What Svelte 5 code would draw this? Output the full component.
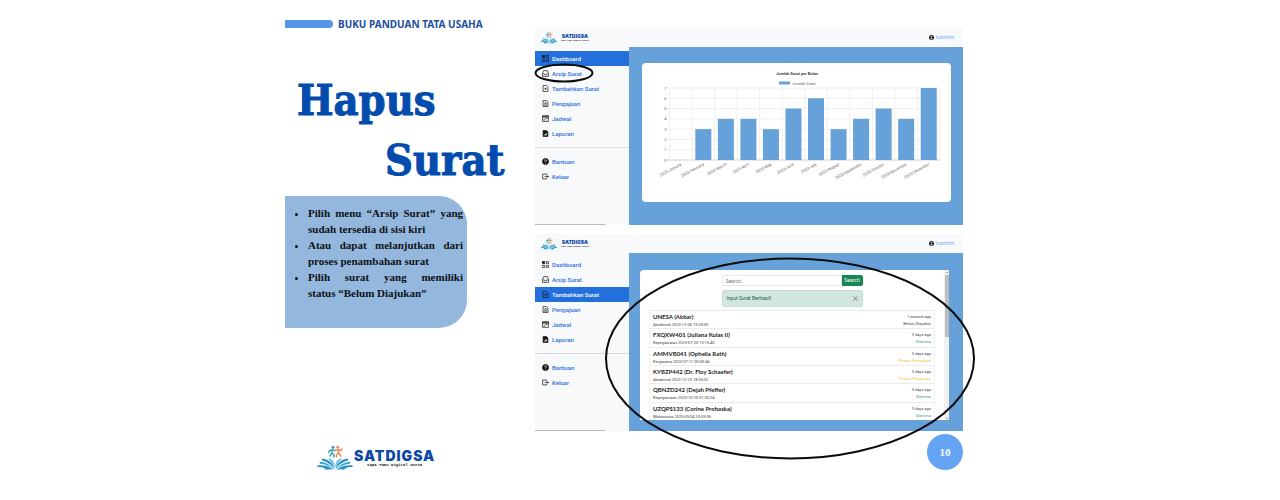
<script>
  const menu = [
    { label: 'Dashboard', icon: 'grid' },
    { label: 'Arsip Surat', icon: 'inbox' },
    { label: 'Tambahkan Surat', icon: 'add' },
    { label: 'Pengajuan', icon: 'person' },
    { label: 'Jadwal', icon: 'calendar' },
    { label: 'Laporan', icon: 'report' }
  ];
  const extra = [
    { label: 'Bantuan', icon: 'help' },
    { label: 'Keluar', icon: 'exit' }
  ];
  const months = [
    ['January', 0], ['February', 3], ['March', 4], ['April', 4], ['May', 3], ['June', 5],
    ['July', 6], ['August', 3], ['September', 4], ['October', 5], ['November', 4], ['December', 7]
  ];
  const letters = [
    { name: 'UNESA (Akbar)', info: 'Akademik.2023-12-06 19:20:00', age: '1 second ago', status: 'Belum Diajukan', tone: 'plain' },
    { name: 'FXQXW401 (Juliana Kulas II)', info: 'Kepegawaian.2023-07-20 13:15:40', age: '3 days ago', status: 'Diterima', tone: 'done' },
    { name: 'AMMVB041 (Ophelia Rath)', info: 'Kerjasama.2023-07-11 00:00:46', age: '3 days ago', status: 'Proses Pengajuan', tone: 'wait' },
    { name: 'KYBZP442 (Dr. Floy Schaefer)', info: 'Akademik.2023-12-29 18:55:02', age: '3 days ago', status: 'Proses Pengajuan', tone: 'wait' },
    { name: 'QBNZD242 (Dejah Pfeffer)', info: 'Kepegawaian.2023-10-20 01:30:24', age: '3 days ago', status: 'Diterima', tone: 'done' },
    { name: 'UZQPS133 (Corine Prohaska)', info: 'Mahasiswa.2023-05-04 23:59:06', age: '3 days ago', status: 'Diterima', tone: 'done' }
  ];
  const left = 27.5, right = 298, top = 25, bottom = 97;
  const step = (right - left) / 12;
  const unit = (bottom - top) / 7;
</script>

{#snippet brand(size)}
  <div class="brand {size}">
    <svg viewBox="0 0 36 26" aria-hidden="true">
      <g fill="none" stroke-linecap="round" stroke-linejoin="round">
        <g stroke="#3f9fae" stroke-width="1.5">
          <path d="M15.500 4.500 15 8l-2 3M15 8l2 1.500v2.500M15.500 4.800 12.500 5.500l-.8 2M15.500 5l2.700.5" />
        </g>
        <g stroke="#ee8a55" stroke-width="1.5">
          <path d="M21 4.500 21.500 8l2.500 3M21.500 8l-2 1.500v2.500M21 4.800l3 .7 1-1.500M21 5l-2.500.5" />
        </g>
      </g>
      <circle cx="16" cy="2.200" r="1.500" fill="#3f9fae" />
      <circle cx="20.800" cy="2.200" r="1.500" fill="#ee8a55" />
      {#each ['', 'translate(36 0) scale(-1 1)'] as flip}
        <g transform={flip}>
          <path fill="#2490c4" d="M17.600 24.500C16.500 19 12.500 14.500 5 13.500v2c5.500 1.500 9.500 4 12.600 9Z" />
          <path fill="#37a8d6" d="M16.800 24.500C13.500 20 9 17.300 2.800 16.800v2c5.500.5 9.500 2 14 5.700Z" />
          <path fill="#2490c4" d="M16.500 25C12 21 7 19.800.5 20.300v1.700c4-.3 6.500.2 8.500 2.700 2.500-.8 5-.7 7.500.3Z" />
          <path fill="#63c0e2" d="M17.800 22.500c-.2-5-2-8-6-9.500v1.700c2.500 2 4.500 4.500 6 7.800Z" />
        </g>
      {/each}
    </svg>
    <div class="words">
      <strong>SATDIGSA</strong>
      <small>Sapa Tamu Digital Unesa</small>
    </div>
  </div>
{/snippet}

{#snippet icon(name)}
  <svg class="icon" viewBox="0 0 16 16" fill="none" stroke="currentColor" stroke-width="1.6" aria-hidden="true">
    {#if name === 'grid'}
      <path d="M1 1h5v5H1z" fill="currentColor" /><path d="M10 1h5v5h-5zM1 10h5v5H1zM10 10h5v5h-5z" />
    {:else if name === 'inbox'}
      <path d="M3.500 1.500h9L15 8v6.500H1V8zM1 9h4.500c.3 3 4.700 3 5 0H15" />
    {:else if name === 'add'}
      <path d="M2.500 1h7.500l3.500 3.500V15h-11zM8 6v5M5.500 8.500h5" />
    {:else if name === 'person'}
      <path d="M2.500 1h7.500l3.500 3.500V15h-11z" /><circle cx="8" cy="7.500" r="1.800" /><path d="M4 14c.8-4 7.200-4 8 0" />
    {:else if name === 'calendar'}
      <path d="M1 1.500h14v13H1zM1 5h14M1 3.500h14M8 8h5M3 11h5" />
    {:else if name === 'report'}
      <path d="M2.500 1h7.500l3.500 3.500V15h-11z" fill="currentColor" /><path d="M5.500 12.500V10M8 12.500V8.500M10.500 12.500V7" stroke="#fff" />
    {:else if name === 'help'}
      <circle cx="8" cy="8" r="7" fill="currentColor" /><path d="M5.500 6.200C5.700 3 10.500 3.300 10.300 6 10.200 7.500 8 7.500 8 9.500M8 11v1.800" stroke="#fff" />
    {:else}
      <path d="M10.500 5V2.500h-9v11h9V11M6 8h9M12.500 5.500 15 8l-2.500 2.500" />
    {/if}
  </svg>
{/snippet}

{#snippet topbar()}
  <header class="topbar">
    {@render brand('small')}
    <a class="user" href="#profil">
      <svg viewBox="0 0 16 16" aria-hidden="true">
        <circle cx="8" cy="8" r="8" fill="#222" />
        <circle cx="8" cy="5.500" r="2.500" fill="#fff" />
        <path d="M4 13c1-4 7-4 8 0-2.500 2-5.500 2-8 0Z" fill="#fff" />
      </svg>
      <span>tuadmin</span>
    </a>
  </header>
{/snippet}

{#snippet sidebar(active, circled)}
  <nav class="sidebar">
    <ul>
      {#each menu as item}
        <li>
          <a href="#menu" class:active={item.label === active}>{@render icon(item.icon)}<span>{item.label}</span></a>
          {#if item.label === circled}
            <svg class="mark" viewBox="0 0 60 20" aria-hidden="true"><ellipse cx="30" cy="10" rx="28.500" ry="8.500" /></svg>
          {/if}
        </li>
      {/each}
    </ul>
    <ul class="extra">
      {#each extra as item}
        <li><a href="#menu">{@render icon(item.icon)}<span>{item.label}</span></a></li>
      {/each}
    </ul>
    <div class="track"></div>
  </nav>
{/snippet}

<main class="slide">
  <section class="guide">
    <p class="label"><span class="tab"></span>BUKU PANDUAN TATA USAHA</p>
    <h1><span>Hapus</span><span class="second">Surat</span></h1>
    <div class="panel">
      <ul>
        <li>Pilih menu “Arsip Surat” yang sudah tersedia di sisi kiri</li>
        <li>Atau dapat melanjutkan dari proses penambahan surat</li>
        <li>Pilih surat yang memiliki <span class="keep">status “Belum Diajukan”</span></li>
      </ul>
    </div>
    {@render brand('large')}
  </section>

  <section class="shots">
    <article class="screen">
      {@render topbar()}
      <div class="body">
        {@render sidebar('Dashboard', 'Arsip Surat')}
        <div class="stage">
          <div class="card">
            <svg class="chart" viewBox="0 0 309 139" role="img" aria-label="Jumlah Surat per Bulan">
              <text class="title" x="155" y="12" text-anchor="middle">Jumlah Surat per Bulan</text>
              <rect x="137" y="18.500" width="11" height="3" fill="#67a1d9" />
              <text class="tick" x="150" y="21.500">Jumlah Surat</text>
              {#each Array(8) as _, n}
                <line x1={left - 3} x2={right} y1={bottom - n * unit} y2={bottom - n * unit} class:base={n === 0} />
                <text class="tick" x={left - 3} y={bottom - n * unit + 1.500} text-anchor="end">{n}</text>
              {/each}
              {#each Array(13) as _, n}
                <line x1={left + n * step} x2={left + n * step} y1={top} y2={bottom + 2} />
              {/each}
              {#each months as [month, value], n}
                <rect x={left + (n + 0.5) * step - 8} y={bottom - value * unit} width="16" height={value * unit} fill="#67a1d9" />
                <text class="tick" text-anchor="end" transform="translate({left + (n + 0.5) * step + 1} {bottom + 5}) rotate(-29)">2023-{month}</text>
              {/each}
            </svg>
          </div>
        </div>
      </div>
    </article>

    <article class="screen">
      {@render topbar()}
      <div class="body">
        {@render sidebar('Tambahkan Surat', '')}
        <div class="stage list-stage">
          <div class="card scroller">
            <div class="content">
              <form class="search">
                <input type="text" placeholder="Search.." aria-label="Search" />
                <button type="button">Search</button>
              </form>
              <div class="alert" role="status">
                <span>Input Surat Berhasil!</span>
                <button type="button" aria-label="Tutup">
                  <svg viewBox="0 0 10 10" aria-hidden="true"><path d="M1 1l8 8M9 1 1 9" stroke="#4b5a53" stroke-width="1.400" /></svg>
                </button>
              </div>
              <ul class="letters">
                {#each letters as row}
                  <li>
                    <div><b>{row.name}</b><span>{row.info}</span></div>
                    <div class="side"><span>{row.age}</span><span class={row.tone}>{row.status}</span></div>
                  </li>
                {/each}
              </ul>
            </div>
            <div class="bar"><i class="up"></i><i class="thumb"></i><i class="down"></i></div>
          </div>
        </div>
      </div>
      <svg class="ring" viewBox="0 0 372 203" aria-hidden="true"><ellipse cx="186" cy="101.500" rx="184" ry="100" /></svg>
    </article>
    <div class="page">10</div>
  </section>
</main>

<style>
  :global(body) { background: #fff; }
  ul, p, h1 { margin: 0; padding: 0; }
  ul { list-style: none; }
  a { text-decoration: none; }
  svg { display: block; }

  .slide {
    display: grid;
    grid-template-columns: 250px 428px;
    width: fit-content;
    margin: 0 auto;
    padding-right: 32px;
  }
  .guide { display: flex; flex-direction: column; align-items: flex-start; padding-top: 16px; }
  .label {
    display: flex; align-items: center; gap: 5px;
    font: 700 10px/16px "Noto Sans", sans-serif; color: #1c4f9e; white-space: nowrap;
  }
  .tab { width: 48px; height: 8px; border-radius: 0 4px 4px 0; background: #5596e6; }
  h1 {
    display: flex; flex-direction: column; margin-top: 38px; padding-left: 12px;
    font: 700 43px/60px "DejaVu Serif Condensed", "DejaVu Serif", serif; color: #034cae;
    -webkit-text-stroke: 1px #034cae;
  }
  .second { padding-left: 88px; }
  .panel {
    box-sizing: border-box; width: 182px; min-height: 132px; margin-top: 6px;
    padding: 9px 4px 9px 23px; border-radius: 0 28px 28px 0; background: #94b7dd;
    font: 700 11px/16px "Liberation Serif", serif; color: #0c1116; text-align: justify;
  }
  .panel ul { list-style: disc; }
  .keep { white-space: nowrap; }

  .brand { display: flex; align-items: center; color: #0d47a8; }
  .words { display: flex; flex-direction: column; align-items: center; }
  .words strong { font-family: Inter, sans-serif; font-weight: 900; }
  .words small { font-family: "Liberation Mono", monospace; font-weight: 700; color: #222; white-space: nowrap; }
  .large { gap: 1px; margin: 117px 0 0 32px; }
  .large svg { width: 36px; height: 26px; }
  .large strong { font-size: 14px; line-height: 14px; letter-spacing: 1px; }
  .large small { font-size: 4px; line-height: 5px; }
  .small { gap: 3px; }
  .small svg { width: 18px; height: 12px; }
  .small strong { font-size: 5px; line-height: 5px; }
  .small small { font-size: 2px; line-height: 3px; }

  .shots { display: flex; flex-direction: column; gap: 9px; padding-top: 28px; font-family: Roboto, sans-serif; }
  .screen { position: relative; display: flex; flex-direction: column; background: #f8f9fb; }
  .topbar { display: flex; align-items: center; justify-content: space-between; height: 19px; padding: 0 9px 0 5px; }
  .user { display: flex; align-items: center; gap: 2px; font-size: 5px; line-height: 7px; color: #7fb0f5; }
  .user svg { width: 5px; height: 5px; }
  .body { display: grid; grid-template-columns: 94px 1fr; }
  .sidebar { display: flex; flex-direction: column; padding-top: 4px; }
  .sidebar li { position: relative; }
  .sidebar a {
    display: flex; align-items: center; gap: 3px; height: 15px; padding-left: 7px;
    font-size: 6px; line-height: 15px; color: #2a70e0; font-weight: 500;
  }
  .sidebar a.active { background: #2370dc; color: #fff; }
  .icon { width: 7px; height: 7px; color: #151515; }
  .extra { margin-top: 6px; padding-top: 6px; border-top: 1px solid #d9dce0; }
  .track { width: 70px; height: 1px; margin-top: auto; background: #b8b8b8; }
  .mark { position: absolute; left: -1px; top: -3px; width: 60px; height: 20px; }
  .mark ellipse, .ring ellipse { fill: none; stroke: #0b0b0b; stroke-width: 2; }
  .ring { position: absolute; left: 69px; top: 23px; width: 372px; height: 203px; pointer-events: none; }

  .stage { padding: 16px 12px 23px 13px; background: #67a1d9; }
  .list-stage { padding: 17px 14px 11px 11px; }
  .card { border-radius: 4px; background: #fff; overflow: hidden; }
  .chart { width: 100%; font-family: Roboto, sans-serif; }
  .chart line { stroke: #f0f0f0; stroke-width: 1; }
  .chart line.base { stroke: #cdcdcd; }
  .title { font-size: 4px; font-weight: 700; fill: #444; }
  .tick { font-size: 4px; fill: #666; }

  .scroller { display: flex; border-radius: 4px 0 0 0; }
  .content { flex: 1; padding: 5px 9px 0; }
  .search, .alert { width: 141px; margin: 0 auto; }
  .search { display: flex; }
  .search input {
    flex: 1; min-width: 0; box-sizing: border-box; height: 11px; padding: 0 3px;
    border: 1px solid #e6e8ea; border-radius: 2px 0 0 2px; font: 5px/9px Roboto, sans-serif; color: #555;
  }
  .search input::placeholder { color: #777; }
  .search button {
    width: 21px; height: 11px; padding: 0; border: 0; border-radius: 0 2px 2px 0;
    background: #198754; color: #fff; font: 5px/11px Roboto, sans-serif;
  }
  .alert {
    display: flex; align-items: center; justify-content: space-between; box-sizing: border-box;
    height: 17px; margin-top: 4px; padding: 0 4px; border: 1px solid #c3dfd1; border-radius: 2px;
    background: #d1e7dd; color: #2f5a45; font-size: 5px; line-height: 7px;
  }
  .alert button { padding: 0; border: 0; background: none; }
  .alert svg { width: 5px; height: 5px; }
  .letters { display: grid; grid-template-rows: repeat(6, 1fr); height: 110px; margin-top: 3px; border: solid #f1f1f1; border-width: 0 1px; box-sizing: border-box; }
  .letters li { display: flex; justify-content: space-between; padding: 2px 3px 0; border-top: 1px solid #ececec; }
  .letters div { display: flex; flex-direction: column; }
  .letters b { font-family: Lato, sans-serif; font-size: 6px; line-height: 8px; font-weight: 700; color: #222; }
  .letters span { font-size: 4px; line-height: 7px; color: #444; }
  .letters .side { align-items: flex-end; }
  .letters .done { color: #3f9a70; }
  .letters .wait { color: #f5bf3a; }
  .bar { display: flex; flex-direction: column; align-items: center; width: 5px; background: #f1f1f1; }
  .thumb { width: 4px; height: 62px; margin-top: 2px; background: #bdbdbd; }
  .up, .down { border: 1px solid transparent; }
  .up { margin-top: 1px; border-bottom-color: #555; }
  .down { margin-top: auto; border-top-color: #333; }
  .page {
    width: 36px; height: 36px; margin: -6px 0 0 auto; border-radius: 50%; background: #65a3f3;
    color: #fff; font: 700 11px/36px "Liberation Serif", serif; text-align: center;
  }
</style>
